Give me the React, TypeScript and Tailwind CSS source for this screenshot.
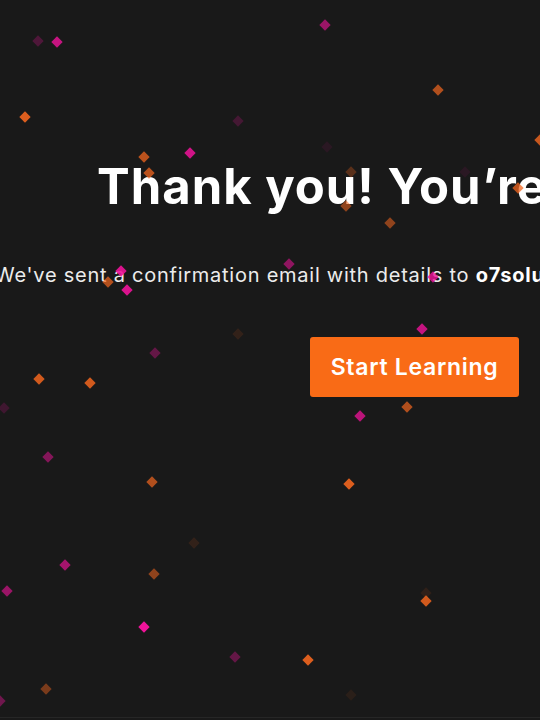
import React from "react";

type C = { x: number; y: number; c: string; o: number };

const O = "#f2661f";
const P = "#f0139a";

const confetti: C[] = [
  { x: 38, y: 41, c: P, o: 0.25 },
  { x: 57, y: 42, c: P, o: 0.8 },
  { x: 325, y: 25, c: P, o: 0.6 },
  { x: 438, y: 90, c: O, o: 0.7 },
  { x: 25, y: 117, c: O, o: 0.9 },
  { x: 238, y: 121, c: P, o: 0.2 },
  { x: 144, y: 157, c: O, o: 0.75 },
  { x: 149, y: 173, c: O, o: 0.75 },
  { x: 190, y: 153, c: P, o: 0.85 },
  { x: 327, y: 147, c: P, o: 0.08 },
  { x: 351, y: 172, c: O, o: 0.3 },
  { x: 346, y: 206, c: O, o: 0.55 },
  { x: 390, y: 223, c: O, o: 0.55 },
  { x: 465, y: 172, c: P, o: 0.08 },
  { x: 518, y: 188, c: O, o: 0.75 },
  { x: 540, y: 140, c: O, o: 0.8 },
  { x: 121, y: 271, c: P, o: 0.9 },
  { x: 108, y: 282, c: O, o: 0.7 },
  { x: 127, y: 290, c: P, o: 0.9 },
  { x: 289, y: 264, c: P, o: 0.55 },
  { x: 433, y: 277, c: P, o: 0.8 },
  { x: 422, y: 329, c: P, o: 0.8 },
  { x: 238, y: 334, c: O, o: 0.12 },
  { x: 155, y: 353, c: P, o: 0.35 },
  { x: 39, y: 379, c: O, o: 0.85 },
  { x: 90, y: 383, c: O, o: 0.85 },
  { x: 4, y: 408, c: P, o: 0.18 },
  { x: 360, y: 416, c: P, o: 0.75 },
  { x: 407, y: 407, c: O, o: 0.7 },
  { x: 48, y: 457, c: P, o: 0.5 },
  { x: 152, y: 482, c: O, o: 0.7 },
  { x: 349, y: 484, c: O, o: 0.9 },
  { x: 194, y: 543, c: O, o: 0.12 },
  { x: 65, y: 565, c: P, o: 0.65 },
  { x: 154, y: 574, c: O, o: 0.55 },
  { x: 7, y: 591, c: P, o: 0.6 },
  { x: 426, y: 593, c: O, o: 0.1 },
  { x: 426, y: 601, c: O, o: 0.85 },
  { x: 144, y: 627, c: P, o: 1 },
  { x: 235, y: 657, c: P, o: 0.35 },
  { x: 308, y: 660, c: O, o: 0.9 },
  { x: 46, y: 689, c: O, o: 0.45 },
  { x: 351, y: 695, c: O, o: 0.08 },
  { x: 0, y: 701, c: P, o: 0.4 },
];

export default function App() {
  return (
    <div
      className="relative h-[720px] w-[540px] overflow-hidden bg-[#191919]"
      style={{ fontFamily: "Inter, 'Noto Sans', sans-serif" }}
    >
      <div className="flex flex-col items-start pt-[159px]">
        <h1 className="ml-[97px] whitespace-nowrap text-[49px] font-bold leading-[56px] tracking-[1px] text-white">
          Thank you! You’re all set!
        </h1>
        <p className="ml-[-5px] mt-[47px] whitespace-nowrap text-[20px] leading-[26px] tracking-[0.75px] text-[#ececec]">
          We've sent a confirmation email with details to{" "}
          <span className="font-bold text-white">o7solutions@example.com</span>
        </p>
        <button className="ml-[310px] mt-[49px] flex h-[60px] w-[209px] items-center justify-center rounded-[3px] bg-[#f96b16] text-[23px] font-semibold tracking-[0.7px] text-white">
          Start Learning
        </button>
      </div>
      <div className="pointer-events-none absolute inset-0">
        {confetti.map((d, i) => (
          <div
            key={i}
            className="absolute h-[8px] w-[8px] rotate-45"
            style={{
              left: d.x - 4,
              top: d.y - 4,
              backgroundColor: d.c,
              opacity: d.o,
            }}
          />
        ))}
      </div>
      <div className="absolute bottom-[2px] left-0 h-px w-full bg-[#262626]" />
    </div>
  );
}
